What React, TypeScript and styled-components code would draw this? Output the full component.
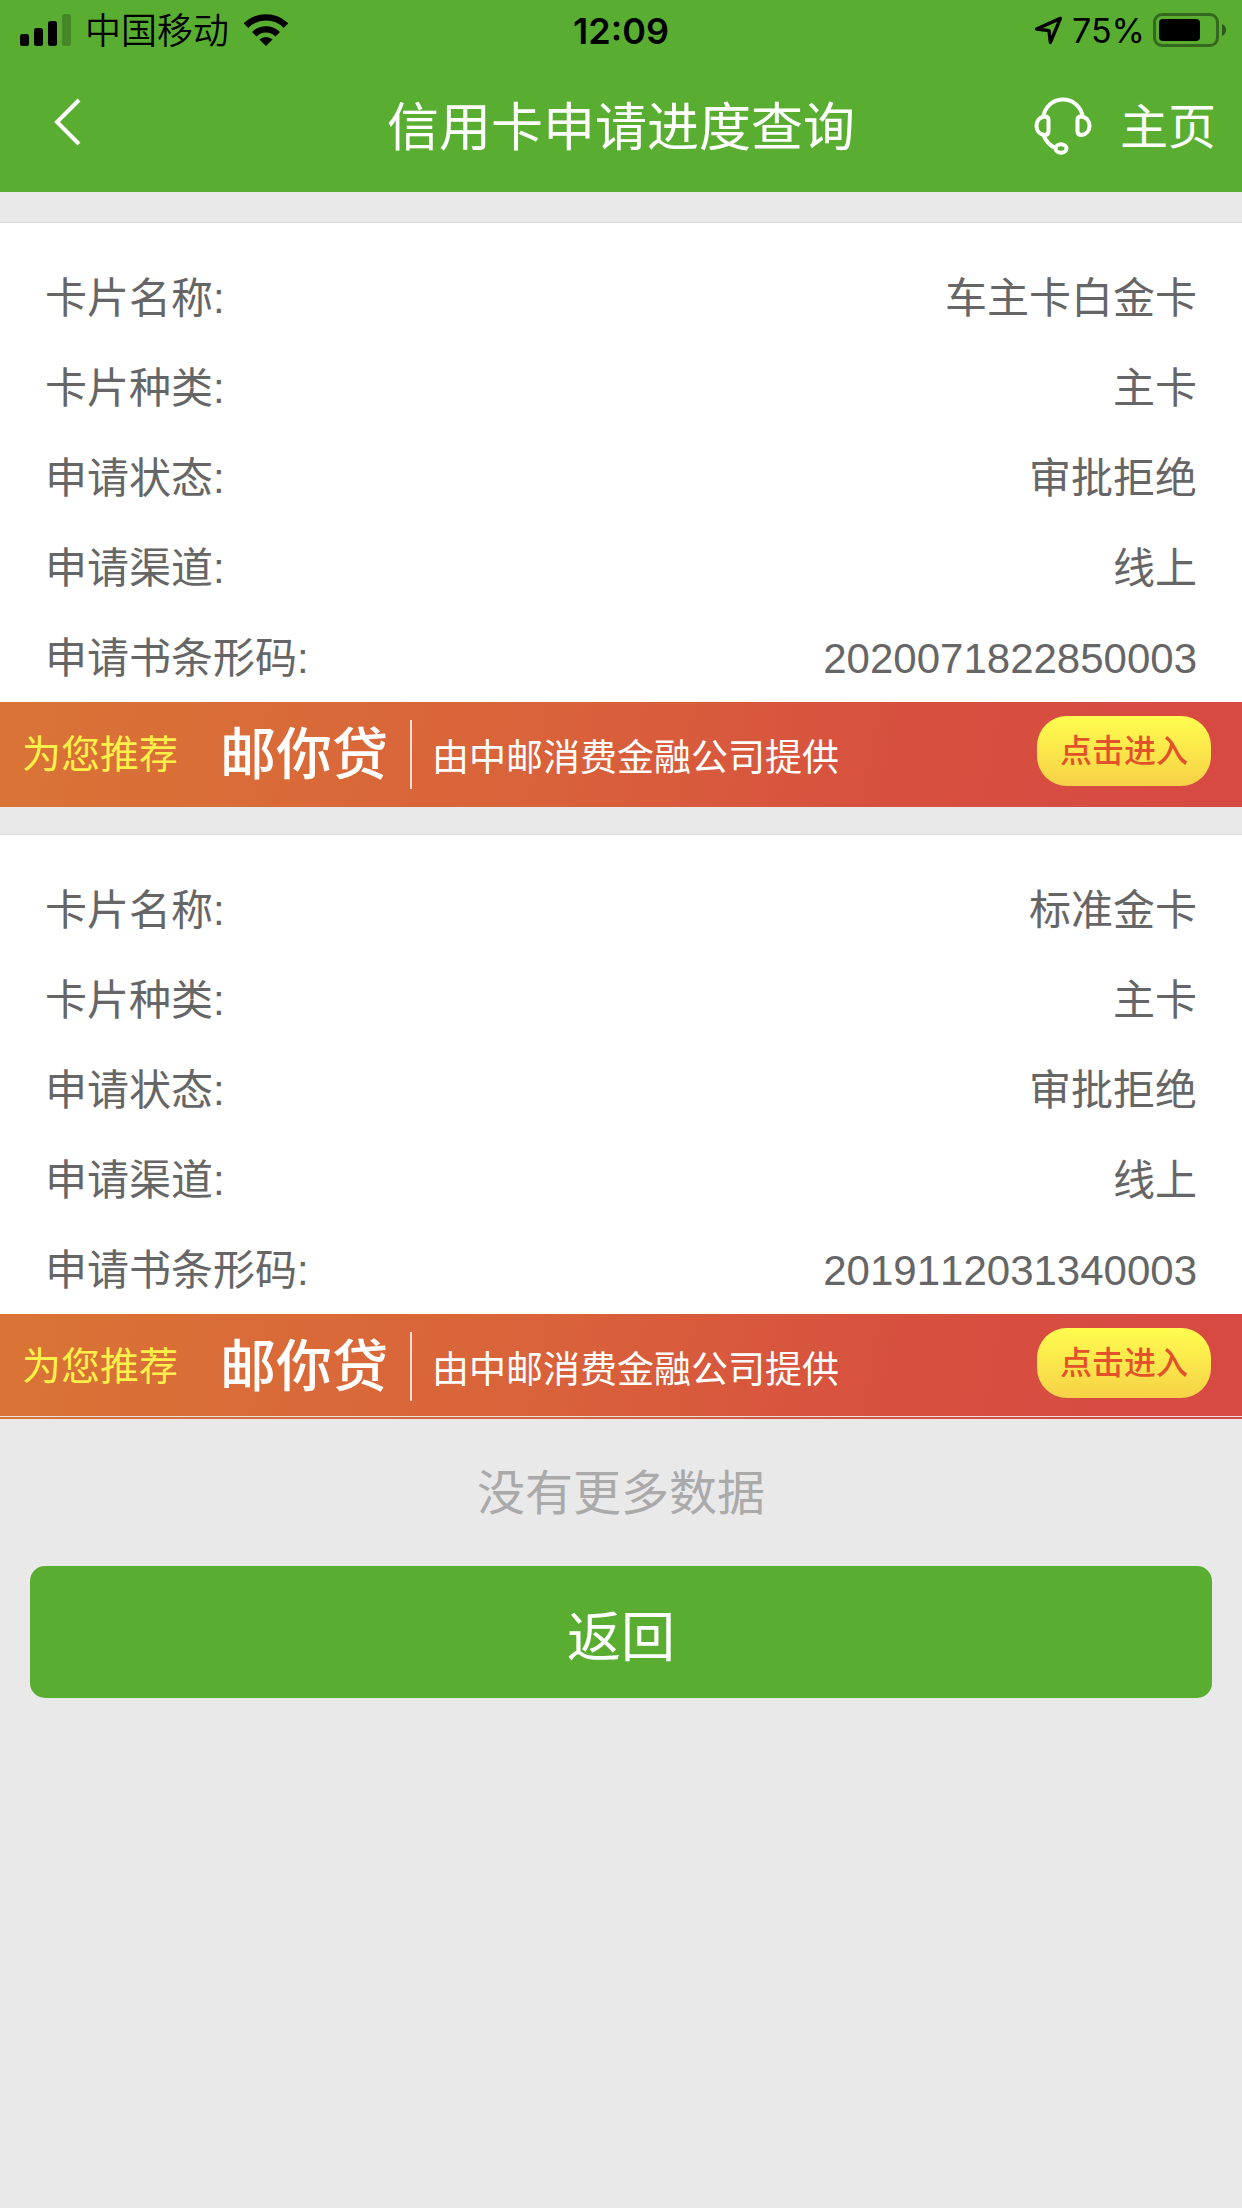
import React from "react";
import styled, { createGlobalStyle } from "styled-components";

const GREEN = "#59ae32";

const GlobalStyle = createGlobalStyle`
  * { box-sizing: border-box; }
  body {
    margin: 0;
    background: #e9e9e9;
    font-family: "Liberation Sans", "Noto Sans CJK SC", sans-serif;
    color: #666;
  }
`;

const Page = styled.div`
  display: flex;
  flex-direction: column;
  min-height: 100vh;
`;

const Header = styled.header`
  background: ${GREEN};
`;

const StatusBar = styled.div`
  display: grid;
  grid-template-columns: 1fr auto 1fr;
  align-items: center;
  height: 60px;
  padding: 0 16px;
  color: #000;
  font-family: "Inter", "Noto Sans CJK SC", sans-serif;
  line-height: 56px;
`;

const StatusGroup = styled.div<{ $end?: boolean }>`
  display: flex;
  align-items: center;
  justify-content: ${(p) => (p.$end ? "flex-end" : "flex-start")};
  gap: ${(p) => (p.$end ? 8 : 14)}px;
`;

const StatusText = styled.span<{ $size: number; $weight: number }>`
  padding-top: 2px;
  font-size: ${(p) => p.$size}px;
  font-weight: ${(p) => p.$weight};
`;

const NavBar = styled.nav`
  display: grid;
  grid-template-columns: 1fr auto 1fr;
  align-items: center;
  height: 132px;
  padding: 0 26px;
  color: #fff;
`;

const IconButton = styled.button`
  display: flex;
  justify-self: start;
  padding: 0;
  border: 0;
  background: none;
  color: inherit;
  cursor: pointer;
`;

const Title = styled.h1`
  margin: 0;
  padding-top: 4px;
  font-size: 52px;
  font-weight: 400;
  line-height: 72px;
`;

const NavActions = styled.div`
  display: flex;
  align-items: center;
  justify-content: flex-end;
  gap: 28px;
`;

const HomeLink = styled.a`
  padding-top: 4px;
  color: inherit;
  font-size: 48px;
  line-height: 72px;
  text-decoration: none;
`;

const Cards = styled.main`
  display: flex;
  flex-direction: column;
  gap: 27px;
  padding-top: 30px;
`;

const Card = styled.section`
  border-top: 1px solid #dcdcdc;
  background: #fff;
`;

const Details = styled.dl`
  margin: 0;
  padding: 29px 45px 0;
`;

const Row = styled.div`
  display: flex;
  align-items: center;
  justify-content: space-between;
  height: 90px;
  padding-top: 4px;
  font-size: 42px;
  font-kerning: none;
  line-height: 60px;
`;

const Label = styled.dt``;

const Value = styled.dd`
  margin: 0;
`;

const Banner = styled.aside<{ $ruled: boolean }>`
  display: flex;
  align-items: center;
  height: 105px;
  padding: 0 31px 0 22px;
  color: #fff;
  white-space: nowrap;
  background:
    ${(p) =>
      p.$ruled
        ? "linear-gradient(#e4e4e4, #e4e4e4) 0 calc(100% - 2px) / 100% 1px no-repeat,"
        : ""}
    linear-gradient(100deg, #d97436 0%, #d9633a 42%, #d7503f 72%, #d74943 100%);
`;

const Recommend = styled.span`
  color: #fdf04a;
  font-size: 39px;
  line-height: 60px;
`;

const Brand = styled.strong`
  margin-left: 42px;
  padding-right: 22px;
  font-size: 56px;
  font-weight: 500;
  line-height: 72px;
`;

const Provider = styled.span`
  display: flex;
  align-items: center;
  height: 69px;
  padding-left: 20px;
  border-left: 2px solid #f8dcd2;
  font-size: 37px;
`;

const EnterLink = styled.a`
  margin: 0 0 7px auto;
  padding: 0 23px;
  border-radius: 30px;
  background: linear-gradient(#fffd4f, #f6d147);
  color: #e2512a;
  font-size: 32px;
  font-weight: 500;
  line-height: 70px;
  text-decoration: none;
`;

const Footer = styled.footer`
  display: flex;
  flex-direction: column;
  padding: 0 30px;
`;

const EmptyNote = styled.p`
  margin: 0;
  padding: 39px 0 36px;
  color: #aaa;
  font-size: 48px;
  line-height: 72px;
  text-align: center;
`;

const ReturnButton = styled.button`
  height: 132px;
  padding: 12px 0 0;
  border: 0;
  border-radius: 15px;
  background: ${GREEN};
  color: #fff;
  font-family: inherit;
  font-size: 54px;
  line-height: 80px;
  cursor: pointer;
`;

const SignalIcon = () => (
  <svg width="55" height="32" viewBox="-4 0 55 32" aria-hidden="true">
    <rect x="0" y="20" width="9" height="12" rx="2.5" />
    <rect x="14" y="14" width="9" height="18" rx="2.5" />
    <rect x="28" y="7" width="9" height="25" rx="2.5" />
    <rect x="42" y="0" width="9" height="32" rx="2.5" opacity="0.22" />
  </svg>
);

const WifiIcon = () => (
  <svg width="46" height="34" viewBox="0 0 46 34" aria-hidden="true">
    <g fill="none" stroke="#000" strokeWidth="6.4">
      <path d="M3 12.6 A28.5 28.5 0 0 1 43 12.6" />
      <path d="M11.3 21.2 A16.5 16.5 0 0 1 34.7 21.2" />
    </g>
    <path d="M23 33 L16.4 26.6 A9.4 9.4 0 0 1 29.6 26.6 Z" />
  </svg>
);

const LocationIcon = () => (
  <svg width="30" height="30" viewBox="0 0 30 30" aria-hidden="true">
    <path
      d="M2.6 14 L26.4 3.4 L16.4 27.4 L15 15.6 Z"
      fill="none"
      stroke="#000"
      strokeWidth="3.4"
      strokeLinejoin="round"
    />
  </svg>
);

const BatteryIcon = () => (
  <svg width="73" height="34" viewBox="0 0 73 34" aria-hidden="true">
    <rect x="1.5" y="1.5" width="63" height="31" rx="7.5" fill="none" stroke="#000" strokeOpacity="0.4" strokeWidth="3" />
    <rect x="6" y="6" width="41" height="22" rx="4" />
    <path d="M69 11 Q73 13 73 17 Q73 21 69 23 Z" opacity="0.5" />
  </svg>
);

const BackIcon = () => (
  <svg width="64" height="72" viewBox="0 0 64 72" fill="none" aria-hidden="true">
    <path d="M53 10 L31 32 L53 54" stroke="#fff" strokeWidth="4" />
  </svg>
);

const HeadsetIcon = () => (
  <svg width="58" height="58" viewBox="0 0 58 58" fill="none" stroke="#fff" strokeWidth="4" aria-hidden="true">
    <path d="M9 20 C11.5 8.500 19.500 2.500 29 2.500 C38.500 2.500 46.500 8.500 49 20" />
    <path d="M11 19.500 C5.500 20 2.500 24 2.500 29 C2.500 33.500 5.500 37.500 10.500 38 C13 38 14.500 36.500 14.500 34 V23 C14.500 21 13.500 19.500 11 19.500 Z" />
    <path d="M47 19.500 C52.500 20 55.500 24 55.500 29 C55.500 33.500 52.500 37.500 47.500 38 C45 38 43.500 36.500 43.500 34 V23 C43.500 21 44.500 19.500 47 19.500 Z" />
    <path d="M9.500 38 C11.500 43.500 15.500 48.500 21.500 51" />
    <ellipse cx="27" cy="51.500" rx="5.500" ry="4.200" />
  </svg>
);

type Detail = [label: string, value: string];

const applications: Detail[][] = [
  [
    ["卡片名称:", "车主卡白金卡"],
    ["卡片种类:", "主卡"],
    ["申请状态:", "审批拒绝"],
    ["申请渠道:", "线上"],
    ["申请书条形码:", "2020071822850003"],
  ],
  [
    ["卡片名称:", "标准金卡"],
    ["卡片种类:", "主卡"],
    ["申请状态:", "审批拒绝"],
    ["申请渠道:", "线上"],
    ["申请书条形码:", "2019112031340003"],
  ],
];

export default function App() {
  return (
    <Page lang="zh-CN">
      <GlobalStyle />
      <Header>
        <StatusBar>
          <StatusGroup>
            <SignalIcon />
            <StatusText $size={36} $weight={350}>中国移动</StatusText>
            <WifiIcon />
          </StatusGroup>
          <StatusText as="time" $size={36} $weight={600}>12:09</StatusText>
          <StatusGroup $end>
            <LocationIcon />
            <StatusText $size={34} $weight={400}>75%</StatusText>
            <BatteryIcon />
          </StatusGroup>
        </StatusBar>
        <NavBar>
          <IconButton type="button" aria-label="后退">
            <BackIcon />
          </IconButton>
          <Title>信用卡申请进度查询</Title>
          <NavActions>
            <IconButton type="button" aria-label="客服">
              <HeadsetIcon />
            </IconButton>
            <HomeLink href="#home">主页</HomeLink>
          </NavActions>
        </NavBar>
      </Header>
      <Cards>
        {applications.map((details, index) => (
          <Card key={index}>
            <Details>
              {details.map(([label, value]) => (
                <Row key={label}>
                  <Label>{label}</Label>
                  <Value>{value}</Value>
                </Row>
              ))}
            </Details>
            <Banner $ruled={index === applications.length - 1}>
              <Recommend>为您推荐</Recommend>
              <Brand>邮你贷</Brand>
              <Provider>由中邮消费金融公司提供</Provider>
              <EnterLink href="#loan">点击进入</EnterLink>
            </Banner>
          </Card>
        ))}
      </Cards>
      <Footer>
        <EmptyNote>没有更多数据</EmptyNote>
        <ReturnButton type="button">返回</ReturnButton>
      </Footer>
    </Page>
  );
}
